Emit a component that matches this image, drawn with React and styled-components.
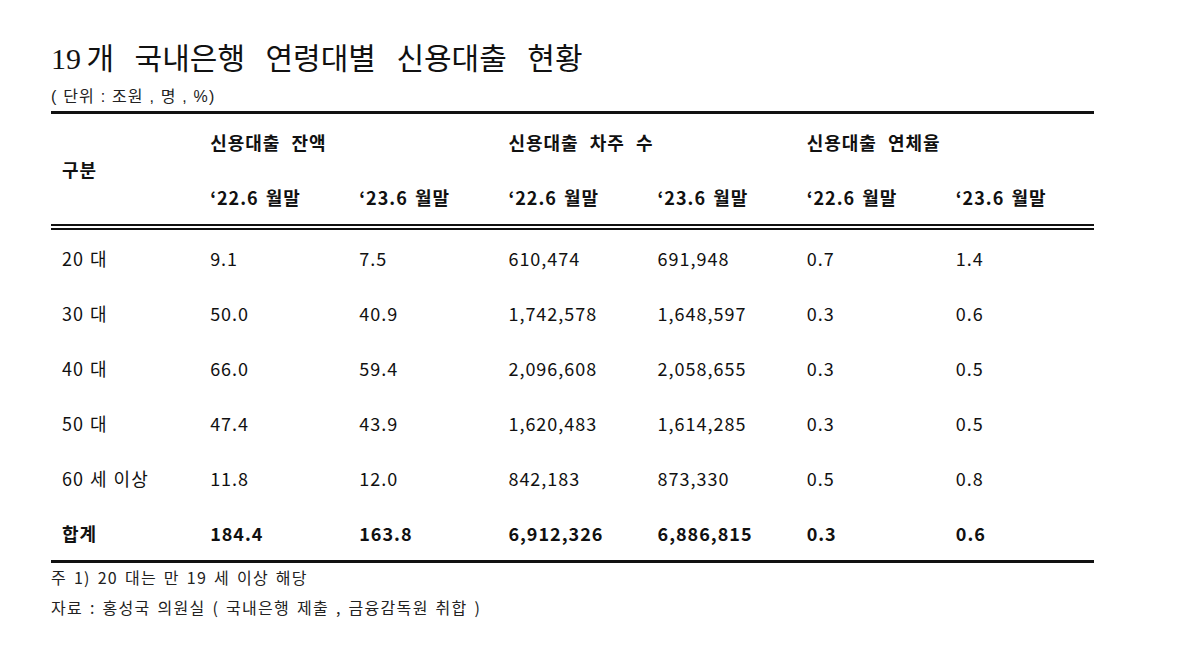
import React from "react";
import styled, { createGlobalStyle } from "styled-components";

const Global = createGlobalStyle`
  html, body { margin: 0; padding: 0; background: #fff; }
  body { font-family: "Noto Sans CJK KR", "Noto Sans", sans-serif; color: #111; }
`;

const Page = styled.div`
  width: 1199px;
  height: 649px;
  box-sizing: border-box;
  padding: 38px 0 0 51px;
  background: #fff;
`;

const Title = styled.h1`
  margin: 0;
  font-family: "Liberation Serif", "Noto Sans CJK KR", serif;
  font-weight: 400;
  font-size: 30px;
  line-height: 42px;
  word-spacing: 13px;
  color: #111;
`;

const TitleNum = styled.span`
  word-spacing: -2px;
`;

const Unit = styled.div`
  margin-top: 8px;
  font-family: "Liberation Sans", "Noto Sans CJK KR", sans-serif;
  font-size: 16px;
  line-height: 18px;
  letter-spacing: 1.2px;
  color: #222;
`;

const Table = styled.table`
  margin-top: 5px;
  width: 1043px;
  border-collapse: collapse;
  table-layout: fixed;
  border-top: 3px solid #111;
  border-bottom: 3px solid #111;
`;

const Head = styled.thead`
  border-bottom: 6px double #111;
`;

const cellBase = `
  text-align: left;
  font-size: 18px;
  letter-spacing: 1px;
  height: 55px;
  padding: 0 0 0 11px;
  vertical-align: middle;
  white-space: nowrap;
`;

const Th = styled.th`
  ${cellBase}
  font-weight: 700;
  word-spacing: ${(p) => (p.$group ? "6px" : "2px")};
`;

const Td = styled.td`
  ${cellBase}
  word-spacing: 1px;
  font-weight: ${(p) => (p.$bold ? 700 : 400)};
`;

const Notes = styled.div`
  margin-top: 3px;
  display: flex;
  flex-direction: column;
  gap: 8px;
  font-size: 16px;
  line-height: 22px;
  letter-spacing: 1.3px;
  word-spacing: 2px;
  color: #222;
`;

const cols = ["‘22.6 월말", "‘23.6 월말", "‘22.6 월말", "‘23.6 월말", "‘22.6 월말", "‘23.6 월말"];

const rows = [
  ["20 대", "9.1", "7.5", "610,474", "691,948", "0.7", "1.4"],
  ["30 대", "50.0", "40.9", "1,742,578", "1,648,597", "0.3", "0.6"],
  ["40 대", "66.0", "59.4", "2,096,608", "2,058,655", "0.3", "0.5"],
  ["50 대", "47.4", "43.9", "1,620,483", "1,614,285", "0.3", "0.5"],
  ["60 세 이상", "11.8", "12.0", "842,183", "873,330", "0.5", "0.8"],
];
const total = ["합계", "184.4", "163.8", "6,912,326", "6,886,815", "0.3", "0.6"];

export default function App() {
  return (
    <Page>
      <Global />
      <Title>
        <TitleNum>19 개</TitleNum> 국내은행 연령대별 신용대출 현황
      </Title>
      <Unit>( 단위 : 조원 , 명 , %)</Unit>
      <Table>
        <colgroup>
          <col style={{ width: 148 }} />
          {cols.map((_, i) => (
            <col key={i} style={{ width: 149 }} />
          ))}
        </colgroup>
        <Head>
          <tr>
            <Th rowSpan={2}>구분</Th>
            <Th colSpan={2} $group>신용대출 잔액</Th>
            <Th colSpan={2} $group>신용대출 차주 수</Th>
            <Th colSpan={2} $group>신용대출 연체율</Th>
          </tr>
          <tr>
            {cols.map((c, i) => (
              <Th key={i}>{c}</Th>
            ))}
          </tr>
        </Head>
        <tbody>
          {rows.map((r, i) => (
            <tr key={i}>
              {r.map((v, j) => (
                <Td key={j}>{v}</Td>
              ))}
            </tr>
          ))}
          <tr>
            {total.map((v, j) => (
              <Td key={j} $bold>
                {v}
              </Td>
            ))}
          </tr>
        </tbody>
      </Table>
      <Notes>
        <span>주 1) 20 대는 만 19 세 이상 해당</span>
        <span>자료 : 홍성국 의원실 ( 국내은행 제출 , 금융감독원 취합 )</span>
      </Notes>
    </Page>
  );
}
